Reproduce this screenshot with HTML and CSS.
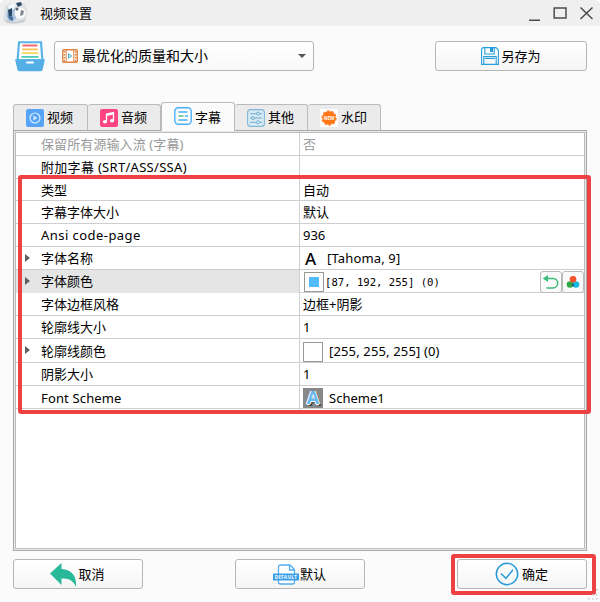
FILE: index.html
```html
<!DOCTYPE html>
<html lang="zh-CN">
<head>
<meta charset="utf-8">
<title>视频设置</title>
<link rel="stylesheet" href="styles.css">
</head>
<body>
<div class="window">
  <header class="titlebar">
    <svg class="app-icon" width="26" height="24" viewBox="0 0 26 24">
      <path d="M1 18 3 5 8 2h14l3 6-1 11-4 3H4z" fill="#dfe2e5"/>
      <path d="M4 15 6 5l7-3 1 16-6 4z" fill="#aac3dd"/>
      <path d="M6 5l5-3 3 1-2 5-5 2z" fill="#f4f7fa"/>
      <path d="M6 9l4-2v8l-3 2zM14 2l5-1 1 3-4 2z" fill="#2b4768"/>
      <circle cx="18" cy="12" r="5.500" fill="#fafafa"/>
      <path d="M19 9l3 1-1 4-3 1z" fill="#7d8891"/>
      <circle cx="15" cy="8" r="1.500" fill="#5b6873"/>
      <path d="M2 18q12 6 22-1l-2 4q-9 3-17 1z" fill="#c9cdd1"/>
      <path d="M6 14l5 2v4l-4-2z" fill="#456f9e"/>
    </svg>
    <h1 class="title">视频设置</h1>
    <svg class="window-controls" width="66" height="16" viewBox="0 0 66 16" fill="none" stroke="#4c4c4c">
      <path d="M1 15.200h11" stroke-width="1.600"/>
      <rect x="26.200" y="3" width="11.800" height="10" stroke-width="1.500"/>
      <path d="M52.500 2.500l12 11.500M64.500 2.500l-12 11.500" stroke-width="1.500"/>
    </svg>
  </header>

  <section class="profile">
    <svg class="tray" width="30" height="31" viewBox="0 0 30 31">
      <path d="M3 .3h24l1.500 19H1.500z" fill="#58b4e8"/>
      <path d="M5 2.300h20l1.200 16H3.800z" fill="#fff"/>
      <path d="M7.500 4.500h15" stroke="#f36b70" stroke-width="1.800"/>
      <path d="M7.200 8.300h15.600" stroke="#f7bf55" stroke-width="1.800"/>
      <path d="M6.800 12.100h16.400" stroke="#f4d65d" stroke-width="1.800"/>
      <path d="M6.500 15.900h17" stroke="#4bc9b5" stroke-width="1.800"/>
      <path d="M0 18.300h30L27.500 29q-.3 1.200-2 1.200h-21q-1.700 0-2-1.200z" fill="#54afe6"/>
      <path d="M12 21.500h6" stroke="#fff" stroke-width="2" stroke-linecap="round"/>
    </svg>
    <div class="select">
      <svg width="16" height="14" viewBox="0 0 16 14">
        <rect x=".7" y=".7" width="14.600" height="12.600" rx="1" fill="#fff" stroke="#e28443" stroke-width="1.400"/>
        <path d="M4.200 1v12M11.800 1v12" stroke="#e28443"/>
        <path d="M2.400 2v11M13.600 2v11" stroke="#d97636" stroke-width="1.500" stroke-dasharray="1.500 1.500"/>
        <path d="M6.500 4.800l3.300 2.200-3.300 2.200z" fill="#d8f1f8" stroke="#52afc9"/>
      </svg>
      <span class="select-text">最优化的质量和大小</span>
      <i class="caret"></i>
    </div>
    <button class="button save">
      <svg width="18" height="18" viewBox="0 0 18 18" fill="none" stroke="#279edb" stroke-width="1.100">
        <path d="M2 .6h13l2.400 2.500V17.400H.6V2z"/>
        <path d="M3.800.8v6.200h9.400V.8M2.800 17V9.600h12.400V17M4 11.500h10"/>
        <path d="M9 1h3v4H9z" fill="#279edb" stroke="none"/>
      </svg>
      <span>另存为</span>
    </button>
  </section>

  <nav class="tabs">
    <div class="tab t1">
      <svg width="18" height="18" viewBox="0 0 18 18"><rect width="18" height="18" rx="2" fill="#56a3f8"/><circle cx="9" cy="9" r="5" fill="none" stroke="#d9ecff" stroke-width="1.200"/><path d="M7.500 6.500 11.300 9l-3.800 2.500z" fill="#d9ecff"/></svg>
      <span>视频</span>
    </div>
    <div class="tab t2">
      <svg width="18" height="18" viewBox="0 0 18 18"><rect width="18" height="18" rx="2" fill="#fb4480"/><path d="M6.500 12.500V5l7-1.500v8" fill="none" stroke="#fff" stroke-width="1.300"/><path d="M6.500 5l7-1.500v2l-7 1.500z" fill="#fff"/><ellipse cx="5" cy="12.800" rx="2.100" ry="1.800" fill="#fff"/><ellipse cx="12" cy="11.700" rx="2.100" ry="1.800" fill="#fff"/></svg>
      <span>音频</span>
    </div>
    <div class="tab t3 active">
      <svg width="18" height="18" viewBox="0 0 18 18" fill="none" stroke="#48b0fa" stroke-width="1.400"><rect x=".8" y=".8" width="16.400" height="16.400" rx="3.500"/><path d="M4.500 5h9M11 9h3M4.500 13h9"/><path d="M4.500 9h5" stroke="#55bc7c" stroke-width="1.600"/></svg>
      <span>字幕</span>
    </div>
    <div class="tab t4">
      <svg width="18" height="18" viewBox="0 0 18 18"><rect x=".6" y=".6" width="16.800" height="16.800" rx="3" fill="#d8eaf4" stroke="#80b8d8" stroke-width="1.100"/><g stroke="#6fabcf" fill="#e4f3fa"><path d="M3 4.700h12M3 9h12M3 13.300h12"/><circle cx="11" cy="4.700" r="1.500"/><circle cx="6" cy="9" r="1.500"/><circle cx="11" cy="13.300" r="1.500"/></g></svg>
      <span>其他</span>
    </div>
    <div class="tab t5">
      <svg width="18" height="18" viewBox="0 0 18 18"><path d="M0 0h18v18H0z" fill="#fff"/><circle cx="9" cy="9" r="6.800" fill="#fd7618"/><circle cx="9" cy="9" r="7" fill="none" stroke="#fd7618" stroke-width="1.300" stroke-dasharray="2.500 1.900"/><text x="9" y="10.700" text-anchor="middle" class="new-label">NEW</text></svg>
      <span>水印</span>
    </div>
  </nav>

  <main class="panel">
    <div class="properties">
      <div class="row muted"><div class="name">保留所有源输入流 (字幕)</div><div class="value">否</div></div>
      <div class="row"><div class="name wide">附加字幕 (SRT/ASS/SSA)</div><div class="value"></div></div>
      <div class="row short"><div class="name">类型</div><div class="value">自动</div></div>
      <div class="row"><div class="name">字幕字体大小</div><div class="value">默认</div></div>
      <div class="row"><div class="name code-page">Ansi code-page</div><div class="value">936</div></div>
      <div class="row"><div class="name expandable">字体名称</div><div class="value spaced"><span class="font-letter">A</span>[Tahoma, 9]</div></div>
      <div class="row selected">
        <div class="name expandable">字体颜色</div>
        <div class="value"><i class="swatch blue"></i><span class="mono">[87, 192, 255] (0)</span>
          <span class="tools">
            <button><svg width="18" height="16" viewBox="0 0 18 16"><path d="M4 4.500h7a4.700 4.700 0 0 1 0 9.400H4.500" fill="none" stroke="#3bbb78" stroke-width="1.500"/><path d="M.8 4.500 6 1v7z" fill="#3bbb78"/></svg></button>
            <button><svg width="14" height="14" viewBox="0 0 14 14"><circle cx="4" cy="9.500" r="3.300" fill="#30a846"/><circle cx="10" cy="9.500" r="3.300" fill="#15b9de"/><circle cx="7" cy="4.300" r="3.300" fill="#f4512d"/><path d="M7 7.500 8 10 7 12 6 10z" fill="#235578"/></svg></button>
          </span>
        </div>
      </div>
      <div class="row"><div class="name">字体边框风格</div><div class="value">边框+阴影</div></div>
      <div class="row"><div class="name">轮廓线大小</div><div class="value">1</div></div>
      <div class="row tall"><div class="name expandable">轮廓线颜色</div><div class="value spaced"><i class="swatch outline"></i>[255, 255, 255] (0)</div></div>
      <div class="row"><div class="name">阴影大小</div><div class="value">1</div></div>
      <div class="row last"><div class="name spaced">Font Scheme</div><div class="value"><span class="scheme">A</span>Scheme1</div></div>
    </div>
  </main>

  <footer class="actions">
    <button class="button">
      <svg class="cancel-icon" width="27" height="24" viewBox="0 0 27 24"><path d="M0 10.500 11.500 0v6C22 6.500 27 13.500 26 24c-2.500-6-6.500-9-14.500-8.500V22z" fill="#27b99a"/></svg>
      <span>取消</span>
    </button>
    <button class="button">
      <svg class="default-icon" width="26" height="21" viewBox="0 0 26 21"><path d="M5.500 10V3q0-2 2-2H17l4.500 4.500V10M5.500 16v2q0 2 2 2h12q2 0 2-2v-2M16.500 1v5h5" fill="#fff" stroke="#55adec" stroke-width="1.300"/><path d="M0 9.500h26v7H0z" fill="#3a9ee9"/><text x="13" y="14.600" text-anchor="middle" class="default-label">DEFAULT</text></svg>
      <span>默认</span>
    </button>
    <button class="button ok">
      <svg width="24" height="24" viewBox="0 0 24 24" fill="none" stroke="#279bd9" stroke-width="1.500"><circle cx="12" cy="12" r="10.700"/><path d="m6 11.500 5 4.800 7-8.500"/></svg>
      <span>确定</span>
    </button>
  </footer>
  <i class="highlight settings-highlight"></i>
  <i class="highlight ok-highlight"></i>
  <svg class="grip" width="12" height="12" viewBox="0 0 12 12" fill="#cacaca"><path d="M9 0h2v1.500H9zM5 5h1.500v1.500H5zM9 5h1.500v1.500H9zM1 9h1.500v1.500H1zM5 9h1.500v1.500H5zM9 9h1.500v1.500H9z"/></svg>
</div>
</body>
</html>
```

FILE: styles.css
```css
* { box-sizing: border-box; }
body { margin: 0; background: #fff; font: 13px/18px "Noto Sans", "Noto Sans CJK SC", sans-serif; color: #000; }
svg { display: block; flex: none; }
button { font: inherit; color: inherit; padding: 0; }
.window { position: relative; width: 600px; height: 602px; background: #fbfbfb; overflow: hidden; border-radius: 5px 5px 0 0; }
.titlebar { height: 26px; display: flex; align-items: center; background: #efefef; padding-left: 2px; }
.title { font-size: 13px; font-weight: 400; margin: 0 auto 0 12px; line-height: 26px; }
.window-controls { margin-right: 6px; }
.profile { height: 76px; display: flex; padding: 15px 13px 0 15px; }
.tray { margin-right: 9px; }
.select { width: 260px; height: 30px; display: flex; align-items: center; padding: 0 8px 0 7px; border: 1px solid #b6b6b6; border-radius: 3px; background: linear-gradient(#fff, #f8f8f8); }
.select-text { margin: 0 auto 0 4px; font-size: 14px; }
.caret { border: solid transparent; border-width: 4.500px 4.500px 0; border-top-color: #555; margin-right: -1px; }
.button { width: 130px; height: 30px; display: flex; align-items: center; justify-content: center; gap: 1px; padding-right: 1px; border: 1px solid #b6b6b6; border-radius: 3px; background: linear-gradient(#fff, #f5f5f5); }
.save { width: 152px; margin-left: auto; gap: 2px; padding-right: 0; }
.tabs { height: 28px; display: flex; align-items: flex-end; padding-left: 13px; }
.tab { height: 26px; display: flex; align-items: center; gap: 3px; padding-left: 12px; border: 1px solid #bbb; border-bottom: 0; border-left-width: 0; background: #ebebeb; border-radius: 3px 3px 0 0; }
.tab span { line-height: 16px; margin-top: -1px; }
.t1 { width: 75px; border-left-width: 1px; }
.t2 { width: 73px; }
.t3 { width: 74px; }
.t4 { width: 73px; }
.t5 { width: 73px; }
.tab.active { height: 29px; padding-bottom: 2px; margin-bottom: -1px; position: relative; background: #fbfbfb; border-left-width: 1px; }
.tab.active span { margin-top: 1px; }
.new-label { font: bold 4.500px "Noto Sans", sans-serif; fill: #fff; }
.default-label { font: bold 4.500px "Noto Sans", sans-serif; letter-spacing: .4px; fill: #fff; }
.panel { height: 421px; margin: 0 13px; padding: 1px; border: 1px solid #aaa; background: #e9e9e9; }
.properties { height: 417px; border: 1px solid #bcbcbc; background: #fff; }
.row { height: 23px; display: grid; grid-template-columns: 284px 1fr; border-bottom: 1px solid #cecece; line-height: 23px; white-space: nowrap; }
.row.short { height: 22px; }
.row.tall { height: 24px; line-height: 25px; }
.row.last { line-height: 24px; }
.name { position: relative; padding-left: 25px; border-right: 1px solid #d0d0d0; }
.value { display: flex; align-items: center; padding-left: 3px; }
.wide { letter-spacing: .3px; }
.code-page { letter-spacing: .45px; }
.spaced { letter-spacing: .15px; }
.muted { color: #999; }
.muted .name { letter-spacing: .1px; }
.selected .name { background: #e5e5e5; }
.expandable::before { content: ""; position: absolute; left: 9px; top: 7px; border: solid transparent; border-width: 4px 0 4px 5px; border-left-color: #606060; }
.font-letter { font-size: 17px; font-weight: 500; width: 24px; padding-left: 2px; }
.swatch { width: 20px; height: 20px; border: 1px solid #999; background: #fff; flex: none; }
.blue { margin-left: 1px; background: #53bcff; box-shadow: inset 0 0 0 4px #fff; }
.outline { margin-right: 6px; }
.mono { font: 10.600px/22px "DejaVu Sans Mono", monospace; margin-left: 1px; }
.tools { display: flex; margin-left: auto; }
.tools button { width: 22px; height: 22px; display: flex; align-items: center; justify-content: center; border: 1px solid #bbb; border-radius: 3px; background: #fafafa; }
.scheme { width: 20px; height: 20px; margin-right: 6px; background: #888; color: #65b8ef; font: bold 18px/19px "Open Sans", sans-serif; text-align: center; text-shadow: -1px 0 #fff, 1px 0 #fff, 0 1px #fff, 2px 2px #444; }
.actions { display: flex; justify-content: space-between; padding: 8px 13px 0; }
.actions .ok { gap: 3px; }
.cancel-icon { margin-top: 2px; }
.highlight { position: absolute; border: 4px solid #ed4143; border-radius: 3px; pointer-events: none; }
.settings-highlight { left: 18px; top: 175px; width: 573px; height: 239px; }
.ok-highlight { left: 451px; top: 554px; width: 145px; height: 41px; }
.grip { position: absolute; left: 587px; top: 589px; }
```
